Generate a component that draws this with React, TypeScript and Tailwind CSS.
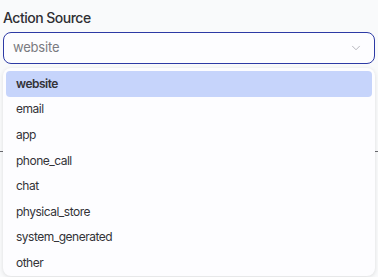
import { ChevronDown } from 'lucide-react';

const options = ['website', 'email', 'app', 'phone_call', 'chat', 'physical_store', 'system_generated', 'other'];

const App = () => {
    const selected = 'website';

    return (
        <div className="relative w-[378px] h-[277px] overflow-hidden bg-[#f9fafb] px-[3px] font-['Inter',sans-serif]">
            <label className="block pt-[9px] text-[14px] leading-[17px] font-medium tracking-[-0.5px] text-[#2f2f33]">Action Source</label>
            <div className="mt-[6px] h-[32px] flex items-center justify-between rounded-[8px] border border-[#2d3aa5] bg-[#fdfdff] pl-[9px] pr-[11px]">
                <span className="text-[13px] tracking-[-0.2px] text-[#7a7a80]">{selected}</span>
                <ChevronDown size={14} strokeWidth={1.2} className="text-[#9a9aa2]" />
            </div>

            {/* content under the open menu */}
            <div className="mt-[87px] -mx-[3px] border-t border-[#6b6b70]" />
            <div className="mt-[54px] h-[15px] border-r border-[#8a8a90]" />
            <div className="mt-[25px] h-[13px] border-r border-[#8a8a90]" />

            <div className="absolute left-[3px] right-[3px] top-[68px] h-[208px] rounded-[8px] bg-[#fdfdff] p-[3px] shadow-[0_1px_4px_rgba(0,0,0,0.12)]">
                {options.map(opt => (
                    <div
                        key={opt}
                        className={`flex h-[25.6px] items-center rounded-[4px] px-[10px] text-[12px] tracking-[-0.5px] text-[#333338] ${opt === selected ? 'bg-[#c6d4fb] font-semibold' : ''}`}
                    >
                        {opt}
                    </div>
                ))}
            </div>
        </div>
    );
}

export default App
